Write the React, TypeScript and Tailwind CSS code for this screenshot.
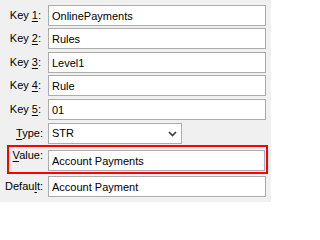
import React from "react";

const font = "font-['Liberation_Sans',Arial,sans-serif] text-[11px]";

function Label({ pre, u, post, w }: { pre: string; u: string; post: string; w: string }) {
  return (
    <span className={`${w} shrink-0 text-right text-black leading-none`}>
      {pre}
      <u className="underline-offset-[2px]">{u}</u>
      {post}
    </span>
  );
}

function Field({ value, w = "w-[218px]" }: { value: string; w?: string }) {
  return (
    <input
      readOnly
      defaultValue={value}
      className={`${w} h-[21px] shrink-0 border border-[#acacac] bg-white pl-[3px] text-black outline-none ${font}`}
    />
  );
}

export default function App() {
  const keys = [
    { n: "1", v: "OnlinePayments", mt: "mt-0" },
    { n: "2", v: "Rules", mt: "mt-[2px]" },
    { n: "3", v: "Level1", mt: "mt-[3px]" },
    { n: "4", v: "Rule", mt: "mt-[2px]" },
    { n: "5", v: "01", mt: "mt-[3px]" },
  ];

  return (
    <div className={`w-[271px] h-[202px] bg-[#f0f0f0] pt-[5px] ${font}`}>
      {keys.map((k) => (
        <div key={k.n} className={`flex items-center h-[21px] ${k.mt}`}>
          <Label pre="Key " u={k.n} post=":" w="w-[41px]" />
          <div className="ml-[7px]">
            <Field value={k.v} />
          </div>
        </div>
      ))}

      <div className="flex items-center h-[21px] mt-[3px]">
        <Label pre="" u="T" post="ype:" w="w-[43px]" />
        <div className="ml-[5px] w-[134px] h-[21px] border border-[#acacac] bg-white flex items-center justify-between pl-[3px] pr-[4px] text-black">
          <span>STR</span>
          <svg width="9" height="6" viewBox="0 0 9 6" className="mt-[1px]">
            <polyline points="1,1 4.5,4.5 8,1" fill="none" stroke="#404040" strokeWidth="1.7" />
          </svg>
        </div>
      </div>

      <div className="ml-[7px] mt-[1px] w-[261px] h-[29px] border-2 border-[#ff0000] flex items-start pt-[3px]">
        <Label pre="" u="V" post="alue:" w="w-[34px]" />
        <div className="ml-[5px]">
          <Field value="Account Payments" w="w-[217px]" />
        </div>
      </div>

      <div className="flex items-center h-[21px] mt-[2px]">
        <Label pre="Defau" u="l" post="t:" w="w-[43px]" />
        <div className="ml-[5px]">
          <Field value="Account Payment" />
        </div>
      </div>
    </div>
  );
}
